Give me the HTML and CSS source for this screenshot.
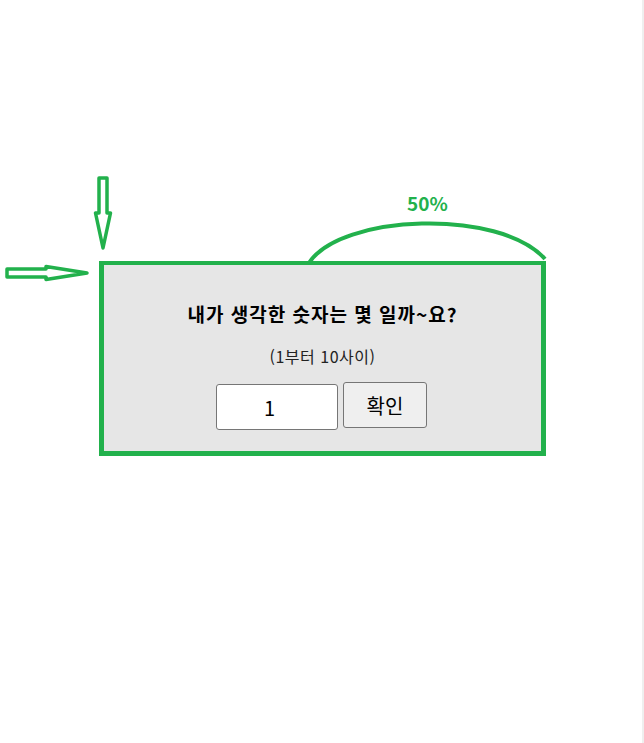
FILE: index.html
```html
<!DOCTYPE html>
<html lang="ko">
<head>
<meta charset="utf-8">
<title>숫자 맞추기</title>
<link rel="stylesheet" href="styles.css">
</head>
<body>
<svg class="marks" width="644" height="743" viewBox="0 0 644 743" aria-hidden="true">
  <polygon points="99,178 107,178 107,213 110.5,213 103,248 95.5,213 99,213" fill="#fff" stroke="#22b14c" stroke-width="3.5" stroke-linejoin="round"/>
  <polygon points="7,269 46,269 46,266.5 87,273 46,279.5 46,277 7,277" fill="#fff" stroke="#22b14c" stroke-width="3.5" stroke-linejoin="round"/>
  <path d="M309,263 C340,214 500,208 545,259" fill="none" stroke="#22b14c" stroke-width="4"/>
</svg>
<div class="pct">50%</div>
<main class="panel">
  <p class="question">내가 생각한 숫자는 몇 일까~요?</p>
  <p class="range">(1부터 10사이)</p>
  <form class="controls">
    <input class="guess" type="number" value="1" min="1" max="10">
    <button class="ok" type="button">확인</button>
  </form>
</main>
</body>
</html>
```
FILE: styles.css
```css
html {
  background: linear-gradient(to left, #efefef 2px, #ffffff 2px);
  min-height: 100%;
}
body {
  margin: 0;
  font-family: "Noto Sans CJK KR", "Noto Sans", sans-serif;
  color: #000;
  position: relative;
  min-height: 743px;
}
.marks {
  position: absolute;
  left: 0;
  top: 0;
  pointer-events: none;
}
.pct {
  position: absolute;
  left: 407px;
  top: 190px;
  font-size: 19px;
  font-weight: 700;
  line-height: 26px;
  color: #22b14c;
}
.panel {
  box-sizing: border-box;
  margin: 261px 0 0 99px;
  width: 447px;
  height: 195px;
  border-style: solid;
  border-color: #22b14c;
  border-width: 4px 5px 5px 5px;
  background: #e6e6e6;
  text-align: center;
  padding-top: 36px;
}
.question {
  margin: 0;
  font-size: 19px;
  font-weight: 700;
  letter-spacing: 1px;
  line-height: 26px;
}
.range {
  margin: 18px 0 0;
  font-size: 16px;
  letter-spacing: 0.5px;
  line-height: 22px;
  color: #222;
}
.controls {
  margin: 15px 0 0;
  display: flex;
  justify-content: center;
  align-items: flex-start;
  gap: 5px;
  padding-right: 2px;
}
.guess {
  box-sizing: border-box;
  width: 122px;
  height: 46px;
  margin-top: 2px;
  border: 1px solid #767676;
  border-radius: 3px;
  background: #fff;
  font-family: "Noto Sans CJK KR", "Noto Sans", sans-serif;
  font-size: 20px;
  text-align: center;
  padding: 0 2px;
}
.ok {
  box-sizing: border-box;
  width: 84px;
  height: 46px;
  border: 1px solid #767676;
  border-radius: 3px;
  background: #efefef;
  font-family: "Noto Sans CJK KR", "Noto Sans", sans-serif;
  font-size: 20px;
  color: #000;
  padding: 0;
}
```
